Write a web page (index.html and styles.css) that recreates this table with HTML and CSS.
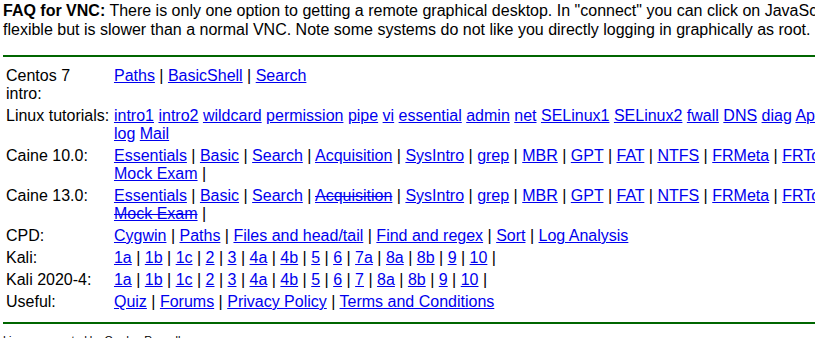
FILE: index.html
```html
<!DOCTYPE html>
<html lang="en">

<head>
    <meta charset="UTF-8">
    <title>Linuxzoo</title>
    <link rel="stylesheet" href="styles.css">
</head>

<body>
    <p class="faq"><b>FAQ for VNC:</b> There is only one option to getting a remote graphical desktop. In "connect" you can click on JavaScript VNC. This is more flexible but is slower than a normal VNC. Note some systems do not like you directly logging in graphically as root.</p>
    <hr>
    <table class="menu">
        <tr>
            <td>Centos 7 intro:</td>
            <td><a href="#">Paths</a> | <a href="#">BasicShell</a> | <a href="#">Search</a></td>
        </tr>
        <tr>
            <td>Linux&nbsp;tutorials:</td>
            <td><a href="#">intro1</a> <a href="#">intro2</a> <a href="#">wildcard</a> <a href="#">permission</a> <a href="#">pipe</a> <a href="#">vi</a> <a href="#">essential</a> <a href="#">admin</a> <a href="#">net</a> <a href="#">SELinux1</a> <a href="#">SELinux2</a> <a href="#">fwall</a> <a href="#">DNS</a> <a href="#">diag</a> <a href="#">Apache</a> <a href="#">Shell1</a> <a href="#">Shell2</a> <a href="#">smtp</a> <a href="#">log</a> <a href="#">Mail</a></td>
        </tr>
        <tr>
            <td>Caine 10.0:</td>
            <td><a href="#">Essentials</a> | <a href="#">Basic</a> | <a href="#">Search</a> | <a href="#">Acquisition</a> | <a href="#">SysIntro</a> | <a href="#">grep</a> | <a href="#">MBR</a> | <a href="#">GPT</a> | <a href="#">FAT</a> | <a href="#">NTFS</a> | <a href="#">FRMeta</a> | <a href="#">FRTools</a> | <a href="#">Browser</a> | <a href="#">Registry</a> | <a href="#">Mock Exam</a> |</td>
        </tr>
        <tr>
            <td>Caine 13.0:</td>
            <td><a href="#">Essentials</a> | <a href="#">Basic</a> | <a href="#">Search</a> | <a href="#" class="old">Acquisition</a> | <a href="#">SysIntro</a> | <a href="#">grep</a> | <a href="#">MBR</a> | <a href="#">GPT</a> | <a href="#">FAT</a> | <a href="#">NTFS</a> | <a href="#">FRMeta</a> | <a href="#">FRTools</a> | <a href="#">Browser</a> | <a href="#">Registry</a> | <a href="#" class="old">Mock Exam</a> |</td>
        </tr>
        <tr>
            <td>CPD:</td>
            <td><a href="#">Cygwin</a> | <a href="#">Paths</a> | <a href="#">Files and head/tail</a> | <a href="#">Find and regex</a> | <a href="#">Sort</a> | <a href="#">Log Analysis</a></td>
        </tr>
        <tr>
            <td>Kali:</td>
            <td><a href="#">1a</a> | <a href="#">1b</a> | <a href="#">1c</a> | <a href="#">2</a> | <a href="#">3</a> | <a href="#">4a</a> | <a href="#">4b</a> | <a href="#">5</a> | <a href="#">6</a> | <a href="#">7a</a> | <a href="#">8a</a> | <a href="#">8b</a> | <a href="#">9</a> | <a href="#">10</a> |</td>
        </tr>
        <tr>
            <td>Kali 2020-4:</td>
            <td><a href="#">1a</a> | <a href="#">1b</a> | <a href="#">1c</a> | <a href="#">2</a> | <a href="#">3</a> | <a href="#">4a</a> | <a href="#">4b</a> | <a href="#">5</a> | <a href="#">6</a> | <a href="#">7</a> | <a href="#">8a</a> | <a href="#">8b</a> | <a href="#">9</a> | <a href="#">10</a> |</td>
        </tr>
        <tr>
            <td>Useful:</td>
            <td><a href="#">Quiz</a> | <a href="#">Forums</a> | <a href="#">Privacy Policy</a> | <a href="#">Terms and Conditions</a></td>
        </tr>
    </table>
    <hr>
    <div class="footer">Linuxzoo created by Gordon Russell.</div>
</body>

</html>
```

FILE: styles.css
```css
html {
    overflow: hidden;
}

body {
    margin: 0;
    padding: 0 3px;
    width: 1003px;
    font-family: "Liberation Sans", Arial, sans-serif;
    font-size: 16px;
    line-height: 18px;
    color: #000;
}

.faq {
    margin: 1px 0 16px;
    line-height: 19px;
}

hr {
    height: 0;
    border: none;
    border-top: 2px solid #006600;
    margin: 0 0 7px;
}

.menu {
    width: 100%;
    border-spacing: 2px;
    margin-bottom: 8px;
}

.menu td {
    padding: 1px;
    vertical-align: top;
}

a {
    color: #0000ee;
}

.old {
    text-decoration: underline line-through;
}

.footer {
    margin-top: 10px;
    font-size: 11px;
    line-height: 13px;
}
```
